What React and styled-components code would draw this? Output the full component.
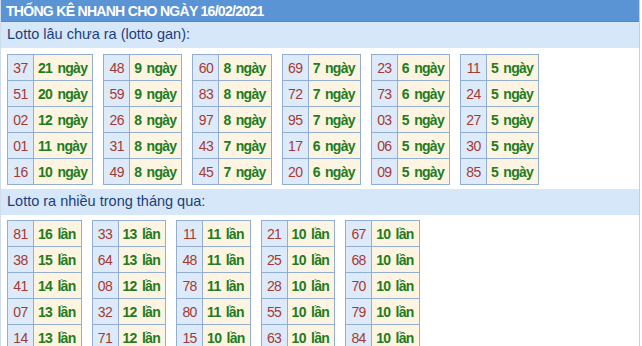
import styled, { createGlobalStyle } from "styled-components";

const GlobalStyle = createGlobalStyle`
  body {
    margin: 0;
    background: #fff;
    font-family: "Liberation Sans", Arial, sans-serif;
  }
`;

const Page = styled.div`
  width: 638px;
  border-left: 1px solid #cfdcec;
  border-right: 1px solid #c4cfdc;
  height: 346px;
  overflow: hidden;
`;

const Header = styled.div`
  height: 21px;
  line-height: 22px;
  background: #5a94d5;
  border-bottom: 1px solid #5289c8;
  color: #fff;
  font-size: 14px;
  font-weight: bold;
  padding-left: 5px;
  letter-spacing: -0.7px;
`;

const SubHeader = styled.div`
  height: 26px;
  line-height: 25px;
  background: #d6e7f9;
  color: #1b3f7c;
  font-size: 14.5px;
  padding-left: 6px;
`;

const Tables = styled.div`
  display: flex;
  align-items: flex-start;
  gap: 10px;
  padding: ${(p) => p.$pad};
`;

const Table = styled.table`
  border-collapse: collapse;
  font-size: 14px;
`;

const Num = styled.td`
  width: 25px;
  height: 25px;
  padding: 0;
  text-align: center;
  background: #ddeaf9;
  color: #a53a35;
  letter-spacing: -0.6px;
  border: 1px solid #93aed3;
`;

const Val = styled.td`
  height: 25px;
  padding: 0 5px 0 4px;
  background: #fdf4e2;
  color: #227c1e;
  font-weight: bold;
  letter-spacing: -0.7px;
  word-spacing: 2px;
  white-space: nowrap;
  border: 1px solid #93aed3;
`;

const gan = [
  [["37", 21], ["51", 20], ["02", 12], ["01", 11], ["16", 10]],
  [["48", 9], ["59", 9], ["26", 8], ["31", 8], ["49", 8]],
  [["60", 8], ["83", 8], ["97", 8], ["43", 7], ["45", 7]],
  [["69", 7], ["72", 7], ["95", 7], ["17", 6], ["20", 6]],
  [["23", 6], ["73", 6], ["03", 5], ["06", 5], ["09", 5]],
  [["11", 5], ["24", 5], ["27", 5], ["30", 5], ["85", 5]],
];

const nhieu = [
  [["81", 16], ["38", 15], ["41", 14], ["07", 13], ["14", 13]],
  [["33", 13], ["64", 13], ["08", 12], ["32", 12], ["71", 12]],
  [["11", 11], ["48", 11], ["78", 11], ["80", 11], ["15", 10]],
  [["21", 10], ["25", 10], ["28", 10], ["55", 10], ["63", 10]],
  [["67", 10], ["68", 10], ["70", 10], ["79", 10], ["84", 10]],
];

const Block = ({ rows, unit }) => (
  <Table>
    <tbody>
      {rows.map(([n, v], i) => (
        <tr key={i}>
          <Num>{n}</Num>
          <Val>
            {v} {unit}
          </Val>
        </tr>
      ))}
    </tbody>
  </Table>
);

export default function App() {
  return (
    <>
      <GlobalStyle />
      <Page>
        <Header>THỐNG KÊ NHANH CHO NGÀY 16/02/2021</Header>
        <SubHeader>Lotto lâu chưa ra (lotto gan):</SubHeader>
        <Tables $pad="6px 0 4px 6px">
          {gan.map((rows, i) => (
            <Block key={i} rows={rows} unit="ngày" />
          ))}
        </Tables>
        <SubHeader>Lotto ra nhiều trong tháng qua:</SubHeader>
        <Tables $pad="5px 0 0 6px">
          {nhieu.map((rows, i) => (
            <Block key={i} rows={rows} unit="lần" />
          ))}
        </Tables>
      </Page>
    </>
  );
}
